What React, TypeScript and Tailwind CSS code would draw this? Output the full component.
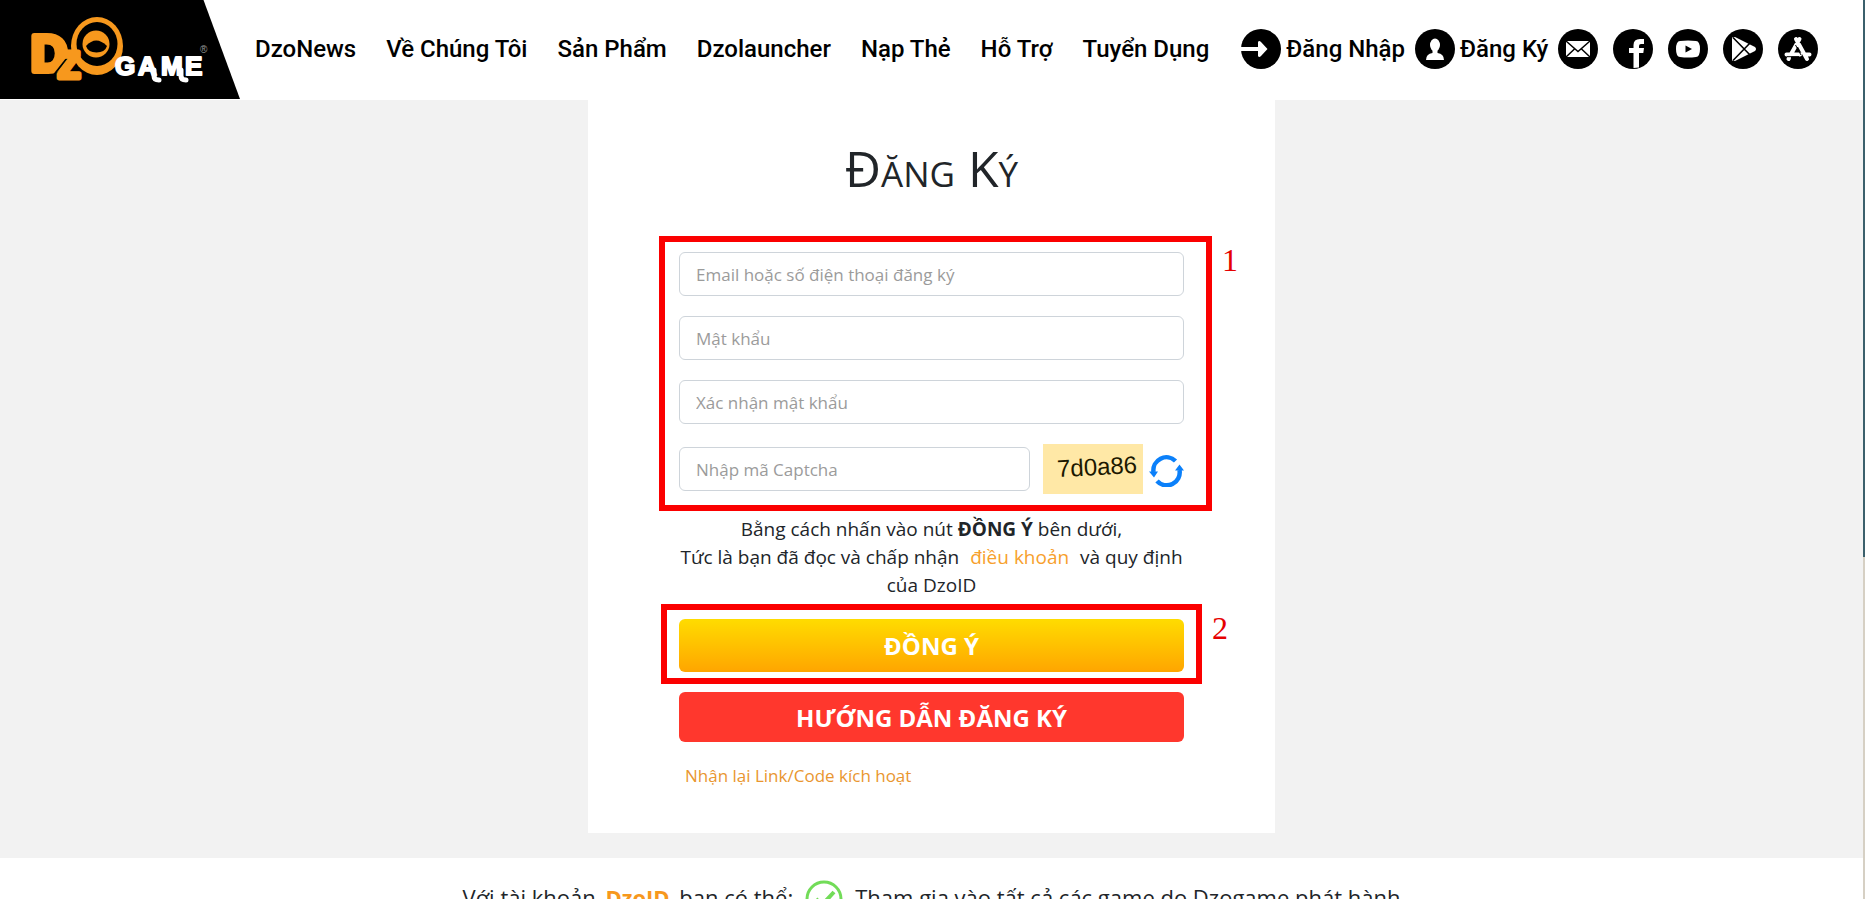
import { useState } from 'react'
import clsx from 'clsx'

const NAV_LINKS = ['DzoNews', 'Về Chúng Tôi', 'Sản Phẩm', 'Dzolauncher', 'Nạp Thẻ', 'Hỗ Trợ', 'Tuyển Dụng']

const FIELDS = [
  { id: 'account', type: 'text', label: 'Email hoặc số điện thoại đăng ký' },
  { id: 'password', type: 'password', label: 'Mật khẩu' },
  { id: 'confirm', type: 'password', label: 'Xác nhận mật khẩu' },
]

const inputClass =
  'h-11 w-full min-w-0 rounded-md border border-[#ced4da] bg-white px-4 text-[17px] text-[#212529] placeholder:text-[#9b9b9b] outline-none focus:border-orange-400'

function Logo() {
  return (
    <svg viewBox="0 0 240 99" className="h-[99px] w-[240px]" role="img" aria-label="DzoGame">
      <path d="M0 0H203.500L240 99H0Z" fill="#000" />
      <ellipse cx="97" cy="46" rx="26" ry="29" fill="#f7981d" />
      <ellipse cx="97" cy="44" rx="20.500" ry="22" fill="#000" />
      <circle cx="96" cy="44" r="13.500" fill="#f7981d" />
      <path d="M86 46q10-11 21 0q-2 6.500-10.500 6.500T86 46Z" fill="#000" />
      <g className="font-['Liberation_Sans'] font-bold" strokeLinejoin="round">
        <text x="31" y="71" fontSize="50" fill="#f7981d" stroke="#f7981d" strokeWidth="6">
          D
        </text>
        <path d="M53 76L68 57" stroke="#000" strokeWidth="2" />
        <text x="58" y="78" fontSize="36" fill="#f7981d" stroke="#f7981d" strokeWidth="5">
          Z
        </text>
        <text x="115 138 161 185" y="75" fontSize="26" fill="#fff" stroke="#fff" strokeWidth="2">
          GAME
        </text>
      </g>
      <path d="M154 70v6q0 4 5 4M181 70v6q0 4 5 4" fill="none" stroke="#fff" strokeWidth="5" strokeLinecap="round" />
      <text x="200" y="53" fontSize="10" fill="#999" className="font-['Liberation_Sans']">
        ®
      </text>
    </svg>
  )
}

function RoundIcon({ children }: { children: React.ReactNode }) {
  return (
    <svg viewBox="0 0 40 40" className="size-10 shrink-0" aria-hidden="true">
      <circle cx="20" cy="20" r="20" fill="#000" />
      {children}
    </svg>
  )
}

const SOCIALS = [
  {
    name: 'Email',
    icon: (
      <>
        <path d="M8 12H32V28H8Z" fill="#fff" />
        <path d="M8 12L20 22.500L32 12M8 28L16.500 20M32 28L23.500 20" fill="none" stroke="#000" strokeWidth="1.500" />
      </>
    ),
  },
  {
    name: 'Facebook',
    icon: (
      <path
        d="M20.500 39V24H16V19H20.500V16Q20.500 10 27 10H31V15H28Q26 15 26 17V19H31L30.300 24H26V38.500Z"
        fill="#fff"
      />
    ),
  },
  {
    name: 'YouTube',
    icon: (
      <>
        <path d="M12 12Q20 11 28 12Q32 12.300 32 20T28 28Q20 29 12 28Q8 27.700 8 20T12 12Z" fill="#fff" />
        <path d="M17.500 16.500V23.500L24 20Z" fill="#000" />
      </>
    ),
  },
  {
    name: 'Google Play',
    icon: (
      <>
        <path d="M9 8.500L12 8L32 18Q34 20 32 22L12 32L9 31.500Z" fill="#fff" />
        <path d="M10 8.500L28 27M10 31.500L28 13" fill="none" stroke="#000" strokeWidth="1.600" />
      </>
    ),
  },
  {
    name: 'App Store',
    icon: (
      <>
        <path
          d="M21.500 10L12.500 26M18 10L29 30M8.500 25.500H22M27 25.500H31.500M11 29L10.500 30"
          fill="none"
          stroke="#fff"
          strokeWidth="4"
          strokeLinecap="round"
        />
        <path d="M9 27.700H21M17.500 16L23 26" fill="none" stroke="#000" strokeWidth="1" />
      </>
    ),
  },
]

function Header() {
  return (
    <header className="flex h-[100px] items-start bg-white font-['Roboto',sans-serif] text-2xl font-medium text-black">
      <a href="#" className="shrink-0">
        <Logo />
      </a>
      <nav className="flex h-[98px] items-center whitespace-nowrap pl-[15px]">
        <div className="flex gap-[30px] pr-8">
          {NAV_LINKS.map(link => (
            <a key={link} href="#">
              {link}
            </a>
          ))}
        </div>
        <a href="#" className="mr-[10px] flex items-center gap-[5px]">
          <RoundIcon>
            <path d="M0 18H17V13Q18 11 20 13L26.500 20L20 27Q18 29 17 27V22H0Z" fill="#fff" />
          </RoundIcon>
          Đăng Nhập
        </a>
        <a href="#" className="mr-[10px] flex items-center gap-[5px]">
          <RoundIcon>
            <ellipse cx="20" cy="16" rx="5" ry="6.500" fill="#fff" />
            <path d="M17.500 20H22.500V24Q29 25 29 31H11Q11 25 17.500 24Z" fill="#fff" />
          </RoundIcon>
          Đăng Ký
        </a>
        <div className="flex gap-[15px]">
          {SOCIALS.map(({ name, icon }) => (
            <a key={name} href="#" aria-label={name}>
              <RoundIcon>{icon}</RoundIcon>
            </a>
          ))}
        </div>
      </nav>
    </header>
  )
}

function Marker({ step, className }: { step: number; className?: string }) {
  return (
    <div className={clsx('pointer-events-none absolute border-6 border-[#fb0000]', className)}>
      <span className="absolute left-full top-0 ml-4 font-['Liberation_Serif',serif] text-[32px] leading-9 text-[#e60000]">
        {step}
      </span>
    </div>
  )
}

function RegisterForm() {
  const [values, setValues] = useState<Record<string, string>>({})
  const update = (e: React.ChangeEvent<HTMLInputElement>) => setValues({ ...values, [e.target.id]: e.target.value })

  return (
    <form className="mx-auto w-full max-w-[505px]" onSubmit={e => e.preventDefault()}>
      <h1 className="mb-[54px] text-center text-[50px] leading-[60px] [font-variant:small-caps]">Đăng Ký</h1>

      <div className="relative">
        <Marker step={1} className="-bottom-[17px] -left-5 -right-7 -top-4" />
        <div className="space-y-5">
          {FIELDS.map(({ id, type, label }) => (
            <input
              key={id}
              id={id}
              type={type}
              aria-label={label}
              placeholder={label}
              value={values[id] ?? ''}
              onChange={update}
              className={inputClass}
            />
          ))}
          <div className="flex items-center">
            <input
              id="captcha"
              type="text"
              aria-label="Nhập mã Captcha"
              placeholder="Nhập mã Captcha"
              value={values.captcha ?? ''}
              onChange={update}
              className={clsx(inputClass, 'flex-1')}
            />
            <div className="ml-[13px] flex h-[50px] w-[100px] items-center justify-center bg-[#ffe8a6] pb-1 pl-2">
              <span className="-rotate-3 font-['Liberation_Sans',sans-serif] text-2xl text-[#1c1800]">7d0a86</span>
            </div>
            <button type="button" aria-label="Đổi mã" className="ml-[6px] mt-1">
              <svg viewBox="0 0 35 32" className="h-8 w-[35px]">
                <g fill="none" stroke="#0b80fa" strokeWidth="4.500">
                  <path d="M4.500 17A13 13 0 0 1 26.500 6" />
                  <path d="M30.500 15A13 13 0 0 1 8 26" />
                </g>
                <path d="M0 16.500H9L5 22.500ZM35 15.500H26L30.500 9.500Z" fill="#0b80fa" />
              </svg>
            </button>
          </div>
        </div>
      </div>

      <p className="mt-[21px] text-center text-[19px] leading-7">
        Bằng cách nhấn vào nút <b>ĐỒNG Ý</b> bên dưới,
        <br />
        Tức là bạn đã đọc và chấp nhận{' '}
        <a href="#" className="mx-[6px] text-[#f7a02c]">
          điều khoản
        </a>{' '}
        và quy định của DzoID
      </p>

      <div className="relative mt-5">
        <Marker step={2} className="-bottom-3 -left-[18px] -right-[18px] -top-[15px]" />
        <button
          type="submit"
          className="h-[53px] w-full rounded-md bg-linear-to-b from-[#ffdc00] to-[#ffa500] pt-px text-2xl font-bold text-white"
        >
          ĐỒNG Ý
        </button>
      </div>
      <button type="button" className="mt-5 h-[50px] w-full rounded-md bg-[#ff372d] pt-px text-2xl font-bold text-white">
        HƯỚNG DẪN ĐĂNG KÝ
      </button>
      <a href="#" className="ml-[6px] mt-5 inline-block text-[17px] leading-7 text-[#e9962f]">
        Nhận lại Link/Code kích hoạt
      </a>
    </form>
  )
}

export default function App() {
  return (
    <div className="h-screen overflow-hidden bg-white pr-[2px] font-['Open_Sans','Noto_Sans',sans-serif] text-[#212529]">
      <Header />
      <main className="bg-[#f2f2f2] pb-[25px]">
        <div className="mx-auto min-h-[733px] w-full max-w-[687px] bg-white px-4 pt-[38px]">
          <RegisterForm />
        </div>
      </main>
      <section className="flex items-start justify-center whitespace-nowrap pt-[22px] text-[22px] leading-[34px]">
        <p>
          Với tài khoản <b className="mx-1 text-[#f7981d]">DzoID</b> bạn có thể:
        </p>
        <svg viewBox="0 0 38 38" className="mx-3 size-[38px]" aria-hidden="true">
          <circle cx="19" cy="19" r="17" fill="none" stroke="#72dc58" strokeWidth="3" />
          <path d="M11 19L17 25L29 12" fill="none" stroke="#72dc58" strokeWidth="4" />
        </svg>
        <p>Tham gia vào tất cả các game do Dzogame phát hành</p>
      </section>

      <div className="fixed inset-y-0 right-0 w-[2px] bg-[#d6d0c4]">
        <div className="h-[62%] bg-[#3b606c]"></div>
      </div>
    </div>
  )
}
